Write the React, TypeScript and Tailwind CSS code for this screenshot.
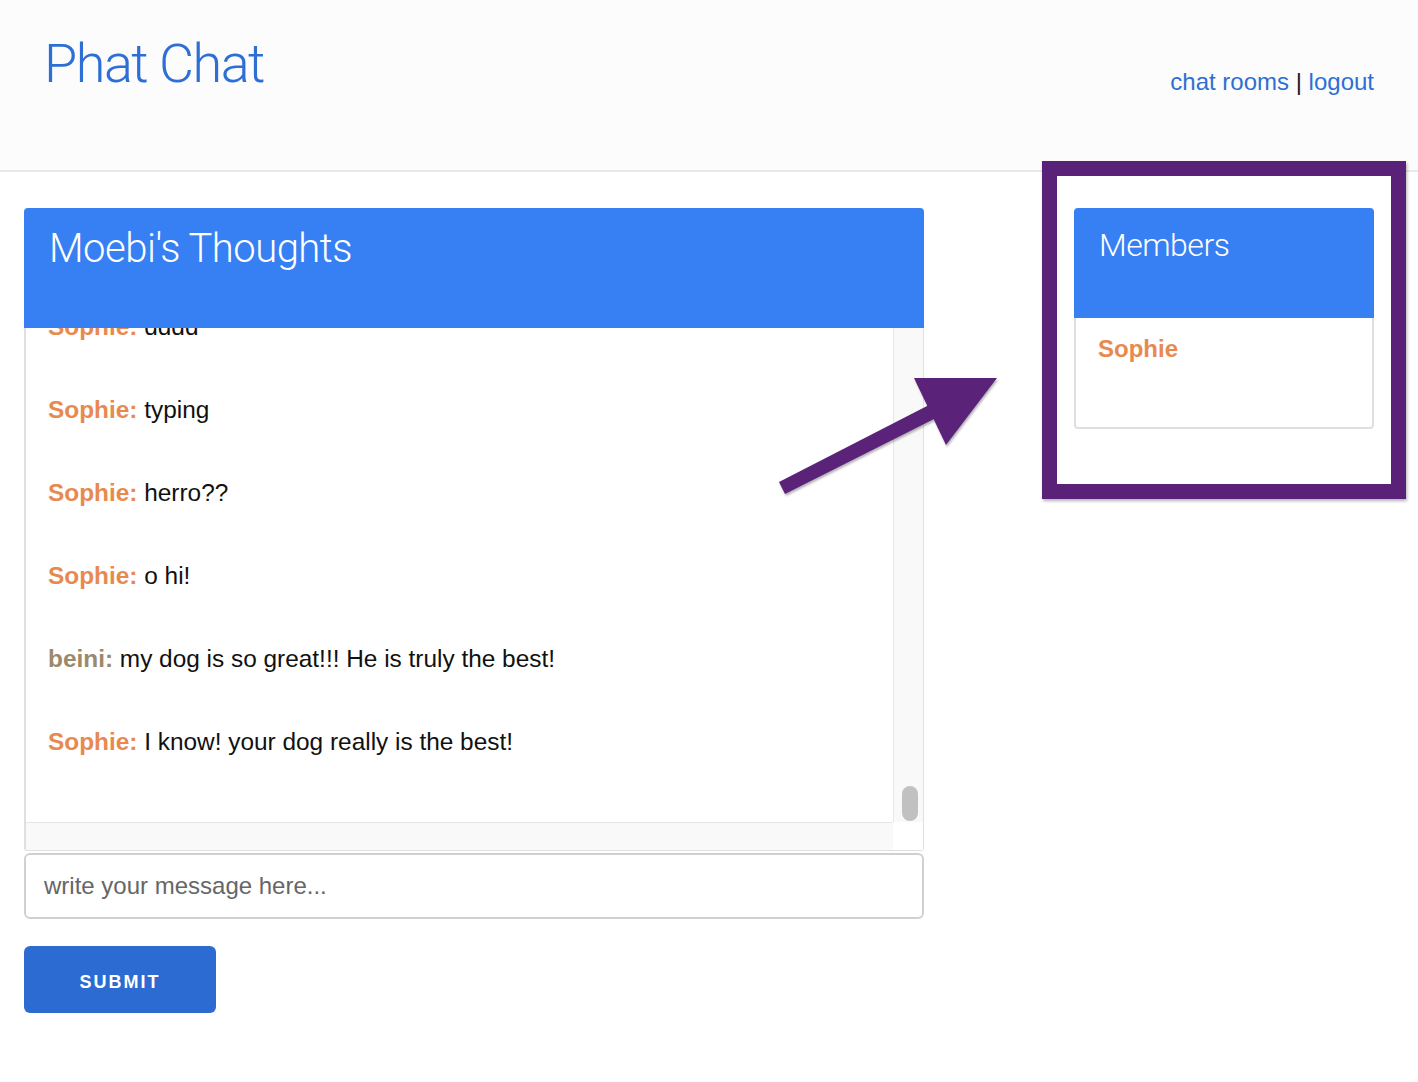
export default function App() {
  const msgs = [
    { u: "Sophie", t: "dddd", c: "text-[#e8894f]" },
    { u: "Sophie", t: "typing", c: "text-[#e8894f]" },
    { u: "Sophie", t: "herro??", c: "text-[#e8894f]" },
    { u: "Sophie", t: "o hi!", c: "text-[#e8894f]" },
    { u: "beini", t: "my dog is so great!!! He is truly the best!", c: "text-[#9b8a69]" },
    { u: "Sophie", t: "I know! your dog really is the best!", c: "text-[#e8894f]" },
  ];
  return (
    <div className="relative min-h-[1082px] bg-white font-['Liberation_Sans',Arial,sans-serif] text-[#111]">
      <header className="flex h-[172px] justify-between border-b-2 border-[#e9e9e9] bg-[#fcfcfc] px-[44px]">
        <h1 className="pt-[33px] font-['Roboto',sans-serif] text-[54px] font-light leading-[62px] tracking-[-1.5px] text-[#2d6fd5]">
          Phat Chat
        </h1>
        <nav className="pt-[66px] text-[24px] leading-[32px]">
          <a className="text-[#2d6fd5]">chat rooms</a>{" "}
          <span className="text-[#222]">|</span>{" "}
          <a className="text-[#2d6fd5]">logout</a>
        </nav>
      </header>

      <main className="flex px-6 pt-[36px]">
        <section className="w-[900px]">
          <div className="h-[120px] rounded-t-[4px] bg-[#3680f3] px-[25px] pt-[17px]">
            <h2 className="font-['Roboto',sans-serif] text-[40px] font-light leading-[48px] tracking-[-0.5px] text-white">
              Moebi's Thoughts
            </h2>
          </div>
          <div className="rounded-b-[3px] border-b border-l-2 border-r border-[#e0e0e0]">
            <div className="flex h-[494px]">
              <div className="flex-1 overflow-hidden">
                <div className="-mt-[43px]">
                  {msgs.map((m, i) => (
                    <div key={i} className="flex h-[83px] items-center px-[22px] text-[24.4px] leading-[30px]">
                      <span>
                        <span className={`font-bold ${m.c}`}>{m.u}:</span> {m.t}
                      </span>
                    </div>
                  ))}
                </div>
              </div>
              <div className="relative w-[30px] border-l border-[#e8e8e8] bg-[#f9f9f9]">
                <div className="absolute left-[8px] top-[458px] h-[35px] w-[16px] rounded-full bg-[#c1c1c1]" />
              </div>
            </div>
            <div className="flex h-[28px]">
              <div className="flex-1 border-t border-[#e6e6e6] bg-[#f9f9f9]" />
              <div className="w-[30px] bg-white" />
            </div>
          </div>
          <input
            className="mt-[2px] block h-[66px] w-full rounded-[6px] border-2 border-[#d0d0d0] px-[18px] text-[24px] outline-none placeholder:text-[#666]"
            placeholder="write your message here..."
          />
          <button className="mt-[27px] h-[67px] w-[192px] rounded-[6px] bg-[#2b6bd2] pt-[6px] text-[18px] font-bold tracking-[2px] text-white">
            SUBMIT
          </button>
        </section>

        <aside className="ml-[150px] w-[300px]">
          <div className="h-[110px] rounded-t-[4px] bg-[#3680f3] px-[25px] pt-[18px]">
            <h3 className="font-['Roboto',sans-serif] text-[32px] font-light leading-[38px] tracking-[-0.5px] text-white">Members</h3>
          </div>
          <div className="h-[111px] rounded-b-[4px] border-2 border-t-0 border-[#e0e0e0] px-[22px] pt-[16px]">
            <div className="text-[24px] font-bold leading-[30px] text-[#e8894f]">Sophie</div>
          </div>
        </aside>
      </main>

      {/* annotation overlays */}
      <div className="absolute left-[1042px] top-[161px] h-[338px] w-[364px] border-[15px] border-[#5a2178] shadow-[1px_2px_3px_rgba(0,0,0,0.3)]" />
      <svg className="absolute left-0 top-0" width="1418" height="1082" style={{ pointerEvents: "none" }}>
        <defs>
          <filter id="sh" x="-10%" y="-10%" width="130%" height="130%">
            <feDropShadow dx="1" dy="2" stdDeviation="1.2" floodColor="#000" floodOpacity="0.3" />
          </filter>
        </defs>
        <g filter="url(#sh)" fill="#5a2178">
          <polygon points="779,482 785,494 936,418 929,405" />
          <polygon points="914,378 997,378 946,445" />
        </g>
      </svg>
    </div>
  );
}
